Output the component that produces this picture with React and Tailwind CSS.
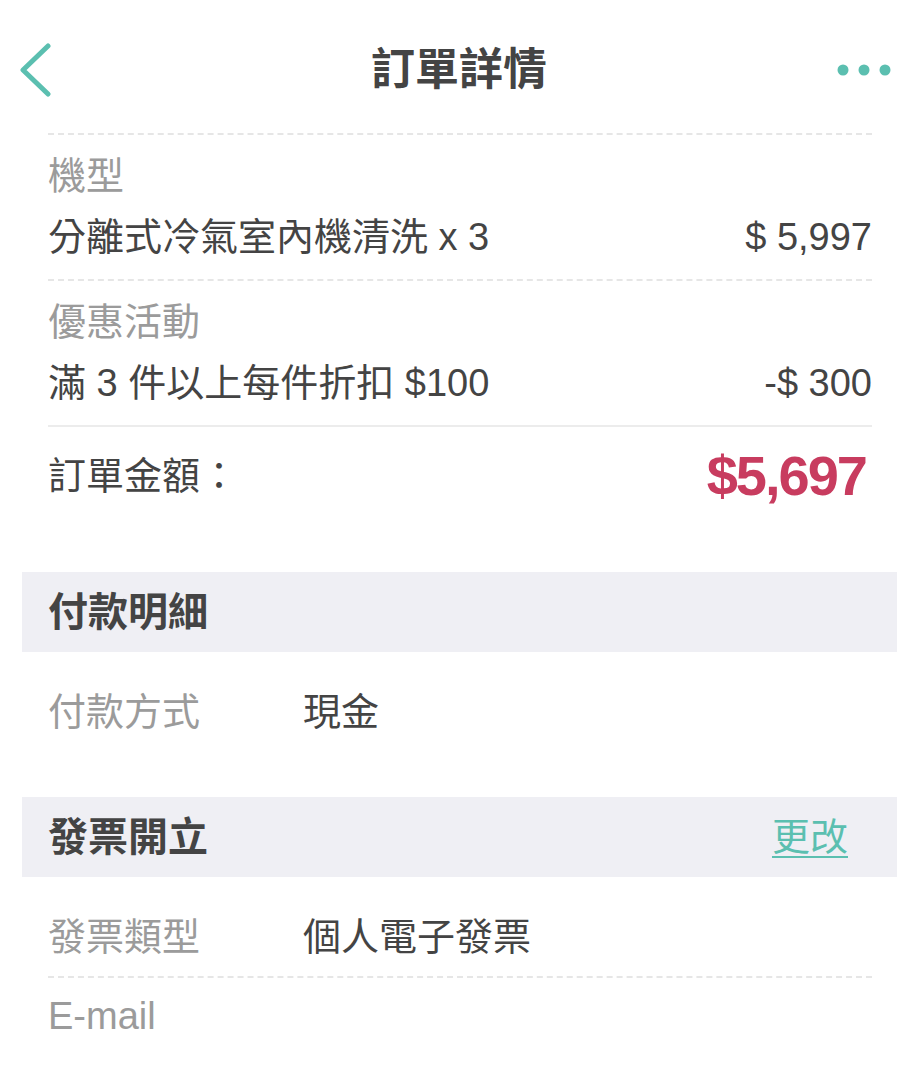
const font = "font-['Liberation_Sans','Noto_Sans_CJK_TC',sans-serif]";

const Dashed = () => <div className="border-t-2 border-dashed border-[#e6e6e6]" />;

const ItemBlock = ({ label, name, price }) => (
  <div className="pt-[16px] pb-[12px]">
    <div className="text-[38px] leading-[50px] text-[#9b9b9b]">{label}</div>
    <div className="mt-[6px] flex items-center justify-between text-[38px] leading-[60px] text-[#444]">
      <span>{name}</span>
      <span>{price}</span>
    </div>
  </div>
);

const Band = ({ title, action }) => (
  <div className="flex h-[80px] items-center justify-between bg-[#efeff4] pl-[26px] pr-[49px]">
    <span className="text-[40px] font-bold text-[#444]">{title}</span>
    {action && <span className="text-[38px] text-[#5bbfb0] underline underline-offset-[6px] decoration-2">{action}</span>}
  </div>
);

const InfoRow = ({ label, value }) => (
  <div className="flex items-center text-[38px] leading-[60px]">
    <span className="w-[255px] text-[#9b9b9b]">{label}</span>
    <span className="text-[#444]">{value}</span>
  </div>
);

export default function App() {
  return (
    <div className={`${font} h-[1070px] w-[910px] overflow-hidden bg-white`}>
      <div className="mt-[20px] flex h-[100px] items-center justify-between pl-[18px] pr-[18px]">
        <div className="w-[64px]">
          <svg width="34" height="54" viewBox="0 0 34 54">
            <path d="M30 3 L5 27 L30 51" fill="none" stroke="#5bbfb0" strokeWidth="5" strokeLinecap="round" strokeLinejoin="round" />
          </svg>
        </div>
        <h1 className="text-[44px] font-bold text-[#444]">訂單詳情</h1>
        <div className="flex w-[56px] justify-end">
          <svg width="56" height="14" viewBox="0 0 56 14">
            <circle cx="7" cy="7" r="5.5" fill="#5bbfb0" />
            <circle cx="28" cy="7" r="5.5" fill="#5bbfb0" />
            <circle cx="49" cy="7" r="5.5" fill="#5bbfb0" />
          </svg>
        </div>
      </div>

      <div className="mt-[13px] pl-[22px] pr-[13px]">
        <div className="pl-[26px] pr-[25px]">
          <Dashed />
          <ItemBlock label="機型" name="分離式冷氣室內機清洗 x 3" price="$ 5,997" />
          <Dashed />
          <ItemBlock label="優惠活動" name="滿 3 件以上每件折扣 $100" price="-$ 300" />
          <div className="border-t-2 border-[#ececec]" />
          <div className="flex h-[98px] items-center justify-between">
            <span className="text-[38px] text-[#444]">訂單金額：</span>
            <span className="mr-[6px] text-[56px] font-bold tracking-[-2px] text-[#c83c5f]">$5,697</span>
          </div>
        </div>

        <div className="mt-[47px]">
          <Band title="付款明細" />
          <div className="h-[145px] pl-[26px] pr-[25px] pt-[30px]">
            <InfoRow label="付款方式" value="現金" />
          </div>
          <Band title="發票開立" action="更改" />
          <div className="pl-[26px] pr-[25px]">
            <div className="pt-[30px] pb-[9px]">
              <InfoRow label="發票類型" value="個人電子發票" />
            </div>
            <Dashed />
            <div className="pt-[8px]">
              <InfoRow label="E-mail" value="" />
            </div>
          </div>
        </div>
      </div>
    </div>
  );
}
